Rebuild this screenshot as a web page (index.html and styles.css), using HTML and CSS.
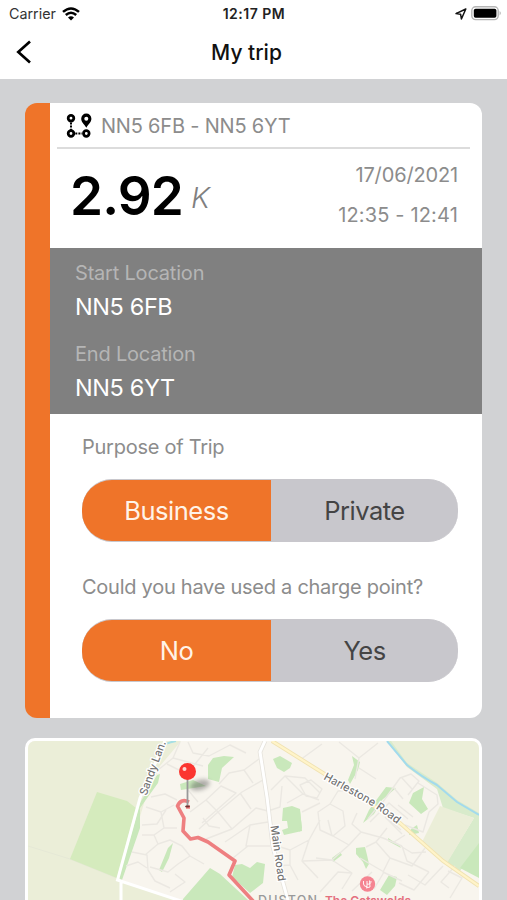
FILE: index.html
```html
<!DOCTYPE html>
<html lang="en">
    <head>
        <meta charset="utf-8">
        <title>My trip</title>
        <link rel="stylesheet" href="styles.css">
    </head>
    <body>
        <header>
            <div class="statusbar">
                <div class="carrier">
                    <span>Carrier</span>
                    <svg width="18" height="14" viewBox="0 0 18 14" fill="none" stroke="#000" stroke-width="2.5">
                        <path d="M1 4.9Q9-2 17 4.9"/>
                        <path d="M3.8 8Q9 3.5 14.2 8"/>
                        <path d="M6 10.6Q9 8 12 10.6L9 13.6Z" fill="#000" stroke="none"/>
                    </svg>
                </div>
                <div class="clock">12:17 PM</div>
                <div class="status-icons">
                    <svg width="12" height="12" viewBox="0 0 12 12" fill="none" stroke="#111" stroke-width="1.5" stroke-linejoin="round">
                        <path d="M10.8 1L1 5.6L5.6 6.2L6.4 11Z"/>
                    </svg>
                    <svg width="31" height="15" viewBox="0 0 31 15">
                        <rect x=".8" y=".8" width="26.4" height="12.8" rx="3.8" fill="#fff" stroke="#b5b5b5" stroke-width="1.4"/>
                        <rect x="2.8" y="2.7" width="22.6" height="9" rx="1.8"/>
                        <path d="M28.6 5Q31 7.2 28.6 9.4Z" fill="#b0b0b0"/>
                    </svg>
                </div>
            </div>
            <div class="navbar">
                <button class="back">
                    <svg width="16" height="24" viewBox="0 0 16 24" fill="none" stroke="#000" stroke-width="2.7">
                        <path d="M15 1.5L3.3 12L15 22.5"/>
                    </svg>
                </button>
                <h1>My trip</h1>
            </div>
        </header>
        <main>
            <section class="trip">
                <div class="route">
                    <svg width="26" height="26" viewBox="0 0 26 26" fill="none" stroke="#000" stroke-width="2.8">
                        <circle cx="5" cy="5.2" r="2.8"/>
                        <circle cx="5" cy="20.5" r="2.8"/>
                        <circle cx="20.3" cy="20.5" r="2.8"/>
                        <path d="M5 9.5V17M9.3 20.5H16" stroke-width="2" stroke-dasharray="2 1.1"/>
                        <path d="M20.3.6a5.1 5.1 0 0 1 5.1 5.1c0 3.1-2.6 5-5.1 9-2.5-4-5.1-5.9-5.1-9A5.1 5.1 0 0 1 20.3.6Z" fill="#000" stroke="none"/>
                        <circle cx="20.3" cy="5.8" r="2" fill="#fff" stroke="none"/>
                    </svg>
                    <span>NN5 6FB - NN5 6YT</span>
                </div>
                <div class="summary">
                    <div class="distance"><b>2.92</b><i>K</i></div>
                    <div class="when">
                        <div>17/06/2021</div>
                        <div class="times">12:35 - 12:41</div>
                    </div>
                </div>
                <div class="locations">
                    <label>Start Location</label>
                    <p>NN5 6FB</p>
                    <label>End Location</label>
                    <p>NN5 6YT</p>
                </div>
                <div class="questions">
                    <label>Purpose of Trip</label>
                    <div class="switch">
                        <button class="on">Business</button>
                        <button>Private</button>
                    </div>
                    <label>Could you have used a charge point?</label>
                    <div class="switch">
                        <button class="on">No</button>
                        <button>Yes</button>
                    </div>
                </div>
            </section>
            <section class="map">
                <svg width="451" height="170" viewBox="28 741 451 170">
                    <defs>
                        <filter id="soft" x="-50%" y="-50%" width="200%" height="200%"><feGaussianBlur stdDeviation="2"/></filter>
                    </defs>
                    <rect x="28" y="741" width="451" height="170" fill="#f8f5ee"/>
                    <!-- fields -->
                    <g fill="#ebeed8">
                        <path d="M28 741H181L160 766L145 800L121 880L180 900V911H28Z"/>
                        <path d="M387 741H479V815L457 802L437 785L407 765Z"/>
                    </g>
                    <path d="M28 846L70 859L117 878" stroke="#e5e8d6" fill="none"/>
                    <!-- parks and woods -->
                    <path d="M97 792L127 801L136 808L117 878L70 859Z" fill="#d5ebbd"/>
                    <path d="M387 741L407 767L437 789L443 808L474 818L447 862L460 871L479 845V813L457 800L437 783L407 763L391 741Z" fill="#d8ebcb"/>
                    <path d="M440 806L474 818L447 863L422 842Z" fill="#ebeed8"/>
                    <g fill="#c9e8bb">
                        <path d="M157 775L160 774L158 783L140 808L140 828L122 880L119 878L140 803Z"/>
                        <path d="M208 765L213 758L224 756L234 757L222 768L219 782L208 779Z"/>
                        <path d="M180 784L193 780L206 786L181 790Z"/>
                        <path d="M273 759L280 756L292 763L290 768L284 772L277 768Z"/>
                        <path d="M283 808L292 806L300 809L302 831L284 835L282 830L288 828L287 821L282 821Z"/>
                        <path d="M235 865L242 864L250 868L257 862L265 864L263 883L250 893L232 877Z"/>
                        <path d="M182 911L183 899L210 868L220 874L248 900V911Z"/>
                        <path d="M173 843L169 858L162 872L159 870L168 848Z"/>
                        <path d="M424 787L413 793L409 803L421 814L428 809L422 799Z"/>
                        <path d="M411 829L417 825L419 833L409 835Z"/>
                        <path d="M388 838L399 845L401 848L388 841Z"/>
                        <path d="M356 848L365 847L367 855L369 864L366 869L363 862L356 854Z"/>
                        <path d="M332 858L340 852L342 855L333 862Z"/>
                        <path d="M389 875L397 877L395 886L387 895L380 890Z"/>
                        <path d="M352 756L360 762L358 770L350 784L348 780L354 765Z"/>
                        <path d="M300 811L302 828L299 832Z"/>
                        <path d="M386 787L396 788L382 800L374 814L363 823L369 810Z"/>
                        <path d="M460 868L479 843V878Z"/>
                    </g>
                    <!-- side streets -->
                    <g class="streets">
                        <path d="M180 742L173 758L158 770M167 764L187 774L208 748M173 758L203 766M188 742L193 753L209 756L230 745L246 753M151 797L165 794L177 800M146 807L161 812L174 805M142 825L157 824L166 810M132 852L147 855L148 870L155 881L170 888M142 835L154 835L158 844L145 855M158 844L170 840L182 846L190 856M150 867L168 872L178 864M178 864L190 856L204 864M175 874L185 882L170 892M126 866L138 862L147 868M161 812L164 828L154 835M164 828L177 828"/>
                        <path d="M190 812L206 800L221 786L236 793L202 823M199 829L218 812L242 792L263 780M206 800L219 813M218 812L232 829L206 839M232 829L256 808L268 811M240 793L251 809M225 842L250 825L268 822M250 825L246 846L270 846M233 858L248 846M219 784L229 773L244 770L259 759M244 770L253 783M220 828L209 826L203 818M188 790L198 802"/>
                        <path d="M271 790L285 776L305 778L320 793M268 811L280 807L282 786M285 776L303 794L319 800M303 794L287 803M274 845L290 850L309 840L320 820M302 812L320 803M309 840L302 861L318 878M276 866L290 865L298 880M290 850L290 865M300 785L311 780L322 789L317 798L306 796ZM318 812L330 804L343 811L345 826L333 836L320 830ZM333 836L349 845L361 832L383 838L402 846M303 861L332 860L352 873L342 889M332 836L328 820M330 804L338 791L356 790M349 845L332 860L316 858M361 832L352 824L357 813M320 892L338 872L352 873"/>
                        <path d="M387 828L376 842L366 847M376 842L390 858L412 866L425 848M402 846L407 861L429 872M390 858L383 872L402 881M429 872L414 890L399 883M443 866L425 885L408 875M448 871L462 878L450 898M455 866L441 882L449 888M360 858L384 872L374 889M372 872L352 891M405 835L394 842L412 853L426 852M401 830L387 818M370 822L389 803L408 819M382 812L396 823M380 806L400 778L411 774L419 781L408 795M394 788L403 799M402 778L412 789M418 783L437 795L438 804L429 812L423 832L405 825M398 805L413 817M385 817L402 834"/>
                        <path d="M339 742L359 758L378 743M359 758L355 779M359 768L376 779M375 810L368 819M300 760L322 744"/>
                    </g>
                    <path d="M157 748Q165 743 176 741" fill="none" stroke="#a5dfe4" stroke-width="2"/>
                    <path d="M387 741L407 765Q422 777 437 785L457 802L479 815" fill="none" stroke="#a2daed" stroke-width="2"/>
                    <!-- main roads -->
                    <path d="M265 741L260 752L267 797L273 847L291 911" fill="none" stroke="#e6e3dc" stroke-width="4.6"/>
                    <g fill="none" stroke="#fff" stroke-width="3">
                        <path d="M165 741L140 798L117.5 880L187 903M121 882V911"/>
                        <path d="M265 741L260 752L267 797L273 847L291 911"/>
                    </g>
                    <path d="M272 741L323 773L400 823L443 861L479 886" fill="none" stroke="#f0e2b2" stroke-width="4"/>
                    <path d="M272 741L323 773L400 823L443 861L479 886" fill="none" stroke="#fff4c9" stroke-width="2.2"/>
                    <g class="roadname">
                        <path id="harlestone" d="M323 779L358 798Q379 809 407 832" fill="none" stroke="none"/>
                        <text textLength="87"><textPath href="#harlestone">Harlestone Road</textPath></text>
                        <text transform="translate(146.5 796) rotate(-70)" textLength="57" lengthAdjust="spacingAndGlyphs">Sandy Lan.</text>
                        <text transform="translate(270.5 826) rotate(82)" textLength="56">Main Road</text>
                    </g>
                    <text class="town" x="258" y="905" textLength="59">DUSTON</text>
                    <text class="poi" x="325" y="905" textLength="86">The Cotswolds</text>
                    <circle cx="367.5" cy="884" r="7.7" fill="#f58491"/>
                    <path d="M363.500 881V884Q364 887 367 886.500M367 881V888M367 884Q371 885 371 881M369.500 880.500L370 887L366 888" fill="none" stroke="#fff" stroke-width=".9"/>
                    <!-- driven route -->
                    <path d="M190 807H186M189 802Q181 798 177.500 806L184 818L183 831L190.500 839L198 837.500L208 842L235 861L229 875L254 902" fill="none" stroke="#ee7f80" stroke-width="3.6" stroke-linejoin="round"/>
                    <ellipse cx="200" cy="785" rx="10" ry="5" fill="#555" opacity=".45" filter="url(#soft)" transform="rotate(-15 200 785)"/>
                    <path d="M187.5 779V806" stroke="#999" stroke-width="1.8"/>
                    <ellipse cx="187.5" cy="806.5" rx="2.5" ry="1" fill="#733"/>
                    <circle cx="187.5" cy="771.5" r="8.5" fill="#fb3530"/>
                    <circle cx="184.5" cy="769" r="2" fill="#ffd5d2"/>
                </svg>
            </section>
        </main>
    </body>
</html>
```

FILE: styles.css
```css
* {
    box-sizing: border-box;
}
body {
    margin: 0;
    height: 100vh;
    overflow: hidden;
    font-family: Inter, "Liberation Sans", sans-serif;
    color: #000;
    background-color: #d1d2d4;
}
button {
    font: inherit;
    border: none;
    padding: 0;
    background: none;
    cursor: pointer;
}
svg {
    display: block;
}
header {
    height: 79px;
    background-color: white;
}
.statusbar {
    display: grid;
    grid-template-columns: 1fr auto 1fr;
    align-items: center;
    height: 27px;
    padding: 0 5px 0 9px;
}
.carrier {
    display: flex;
    align-items: center;
    gap: 6px;
    font-size: 14.3px;
    color: #333;
}
.clock {
    margin-right: 3px;
    font-size: 14px;
    font-weight: 600;
    letter-spacing: 0.5px;
    color: #222;
}
.status-icons {
    display: flex;
    align-items: center;
    justify-content: flex-end;
    gap: 4px;
}
.navbar {
    display: grid;
    grid-template-columns: 40px 1fr 69px;
    align-items: center;
    height: 50px;
    padding-left: 15px;
}
h1 {
    margin: 0;
    text-align: center;
    font-size: 21px;
    font-weight: 500;
    color: #111;
}
main {
    padding: 24px 25px 0;
}
.trip {
    height: 615px;
    border-left: 25px solid #ef7429;
    border-radius: 12px;
    background-color: white;
    overflow: hidden;
}
.route {
    display: flex;
    align-items: center;
    gap: 9px;
    height: 46px;
    margin: 0 12px 0 7px;
    padding: 1px 0 0 9px;
    border-bottom: 2px solid #dcdcdc;
    font-size: 20px;
    letter-spacing: -0.2px;
    color: #8c8c8c;
}
.summary {
    display: flex;
    justify-content: space-between;
    height: 99px;
    padding: 0 24px 0 20px;
}
.distance {
    display: flex;
    align-items: flex-start;
    gap: 8px;
    padding-top: 15px;
}
.distance b {
    font-size: 53px;
    font-weight: 600;
    line-height: 64px;
    letter-spacing: -0.8px;
}
.distance i {
    margin-top: 16px;
    font-size: 29px;
    font-weight: 300;
    line-height: 36px;
    color: #808080;
}
.when {
    padding-top: 6px;
    text-align: right;
    font-size: 20px;
    line-height: 40px;
    letter-spacing: -0.15px;
    color: #8c8c8c;
}
.times {
    letter-spacing: 0.15px;
}
.locations {
    height: 166px;
    padding: 10px 25px;
    background-color: #808080;
}
.locations label {
    display: block;
    font-size: 20px;
    line-height: 30px;
    letter-spacing: -0.2px;
    color: #b5b5b5;
}
.locations p {
    margin: 0 0 13px;
    font-size: 23.5px;
    line-height: 38px;
    letter-spacing: -0.4px;
    color: white;
}
.questions {
    padding: 18px 24px 0 32px;
}
.questions label {
    display: block;
    margin-bottom: 16px;
    font-size: 20px;
    line-height: 31px;
    letter-spacing: -0.26px;
    color: #8c8c8c;
}
.switch {
    display: flex;
    height: 63px;
    margin-bottom: 30px;
    border: solid #c8c7cc;
    border-width: 1px 0;
    border-radius: 30px;
    background-color: #c8c7cc;
    overflow: hidden;
}
.switch button {
    flex: 1;
    font-size: 25.5px;
    letter-spacing: -0.5px;
    color: #444;
}
.switch .on {
    flex: 0 0 189px;
    background-color: #ef7429;
    color: #fff3e8;
}
.map {
    margin-top: 20px;
    height: 200px;
    border: 3px solid white;
    border-radius: 10px;
    background-color: white;
    overflow: hidden;
}
.streets {
    fill: none;
    stroke: #ebe8e2;
    stroke-width: 1.4;
    stroke-linejoin: round;
}
.roadname {
    font-size: 11px;
    font-weight: 500;
    fill: #747474;
    stroke: #fff;
    stroke-width: 2.5px;
    paint-order: stroke;
}
.town {
    font-size: 12.5px;
    font-weight: 500;
    fill: #999;
}
.poi {
    font-size: 12px;
    font-weight: 600;
    fill: #e4707e;
}
```
